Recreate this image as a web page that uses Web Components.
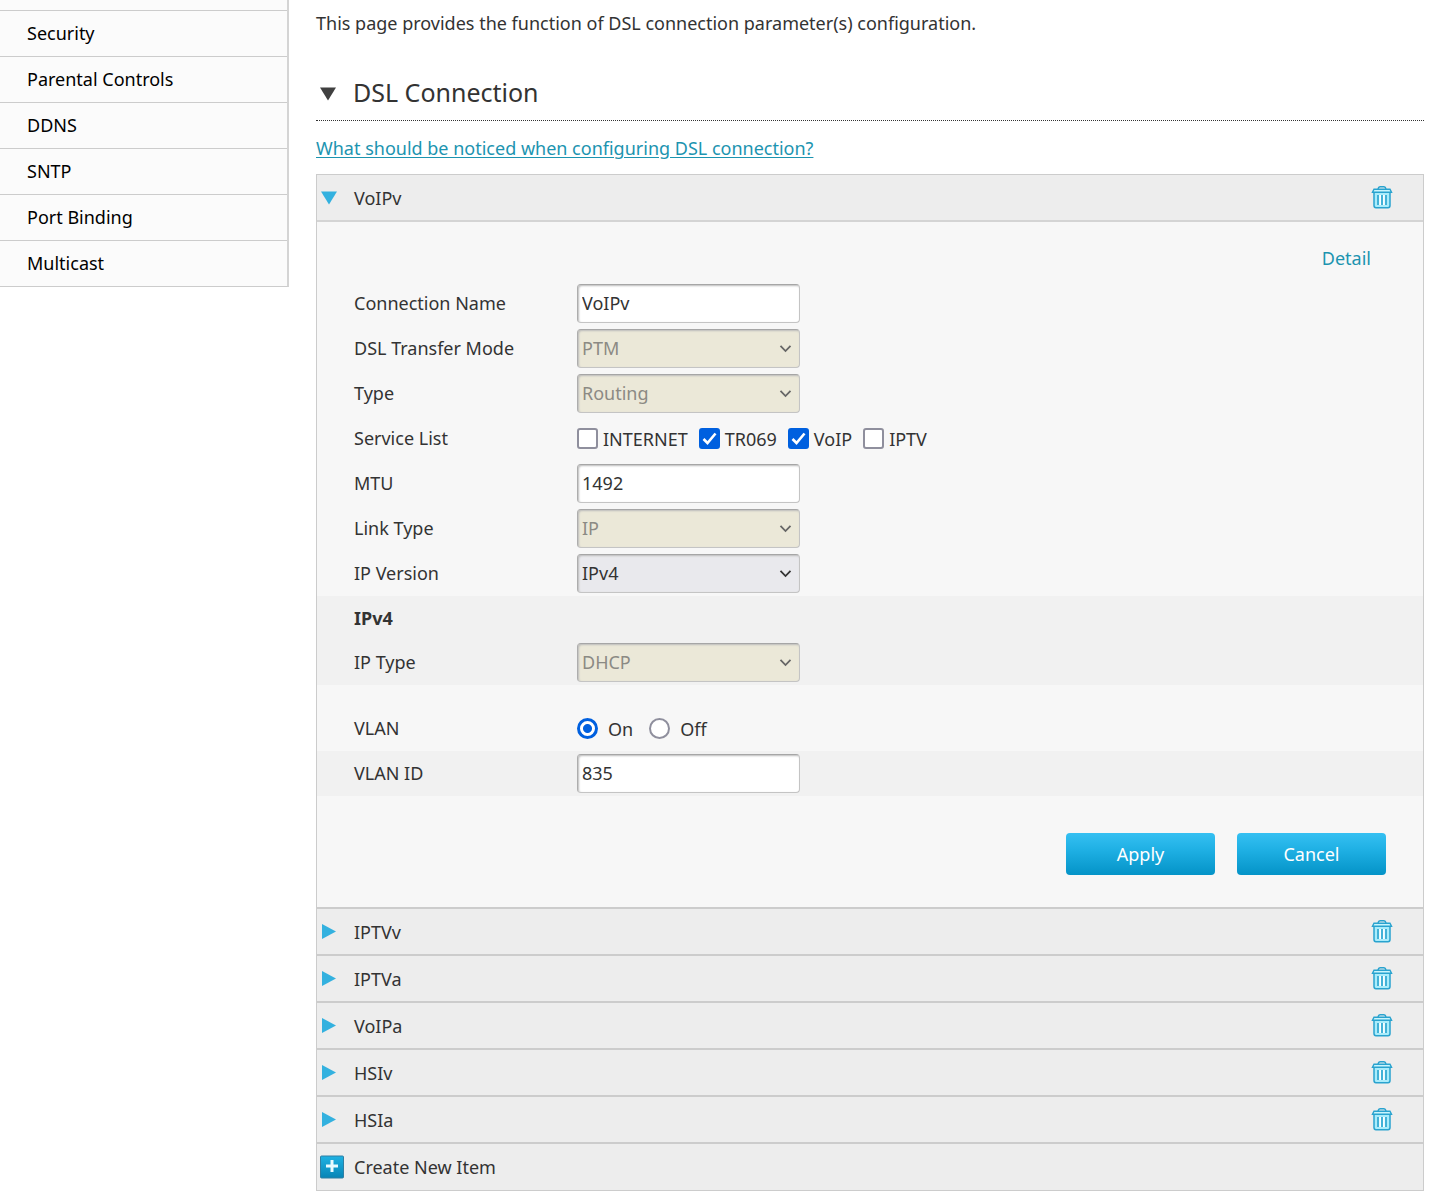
<!DOCTYPE html>
<html lang="en">
<head>
<meta charset="utf-8">
<title>DSL Connection</title>
<style>
  body {
    margin: 0;
    background: #fff;
    color: #333;
    font-family: "Noto Sans", "Open Sans", sans-serif;
    font-size: 18px;
    line-height: 24px;
  }
</style>
</head>
<body>

<page-layout>
  <side-menu slot="side">
    <menu-item>Security</menu-item>
    <menu-item>Parental Controls</menu-item>
    <menu-item>DDNS</menu-item>
    <menu-item>SNTP</menu-item>
    <menu-item>Port Binding</menu-item>
    <menu-item>Multicast</menu-item>
  </side-menu>

  <page-intro>This page provides the function of DSL connection parameter(s) configuration.</page-intro>
  <section-title>DSL Connection</section-title>
  <help-link>What should be noticed when configuring DSL connection?</help-link>

  <connection-list>
    <connection-item name="VoIPv" open>
      <detail-link>Detail</detail-link>
      <text-field label="Connection Name" value="VoIPv"></text-field>
      <select-field label="DSL Transfer Mode" value="PTM" disabled></select-field>
      <select-field label="Type" value="Routing" disabled></select-field>
      <choice-field label="Service List" type="checkbox" options="INTERNET,TR069,VoIP,IPTV" checked="TR069,VoIP"></choice-field>
      <text-field label="MTU" value="1492"></text-field>
      <select-field label="Link Type" value="IP" disabled></select-field>
      <select-field label="IP Version" value="IPv4"></select-field>
      <field-group>
        <group-title>IPv4</group-title>
        <select-field label="IP Type" value="DHCP" disabled></select-field>
      </field-group>
      <choice-field class="spaced" label="VLAN" type="radio" options="On,Off" checked="On"></choice-field>
      <field-group>
        <text-field label="VLAN ID" value="835"></text-field>
      </field-group>
      <button-bar>
        <action-button>Apply</action-button>
        <action-button>Cancel</action-button>
      </button-bar>
    </connection-item>
    <connection-item name="IPTVv"></connection-item>
    <connection-item name="IPTVa"></connection-item>
    <connection-item name="VoIPa"></connection-item>
    <connection-item name="HSIv"></connection-item>
    <connection-item name="HSIa"></connection-item>
    <create-item>Create New Item</create-item>
  </connection-list>
</page-layout>

<script>
// small helper: every element only needs its markup
function define(name, render) {
  customElements.define(name, class extends HTMLElement {
    connectedCallback() {
      if (this.shadowRoot) return;
      this.attachShadow({ mode: "open" });
      this.shadowRoot.innerHTML = render(this);
    }
  });
}

// Layout
define("page-layout", () => `
  <style>
    :host { display: flex; align-items: flex-start; gap: 27px; padding-right: 20px; }
    aside { flex: 0 0 289px; }
    main { flex: 1; min-width: 0; padding-top: 11px; }
  </style>
  <aside><slot name="side"></slot></aside>
  <main><slot></slot></main>
`);

define("side-menu", () => `
  <style>
    :host { display: block; }
    nav {
      padding-top: 10px;
      background: #fbfbfb;
      border-right: 2px solid #d4d4d4;
      border-bottom: 1px solid #ccc;
    }
  </style>
  <nav><slot></slot></nav>
`);

define("menu-item", () => `
  <style>
    :host { display: block; border-top: 1px solid #ccc; }
    a { display: block; padding: 10px 27px 11px; color: #000; text-decoration: none; }
  </style>
  <a href="#"><slot></slot></a>
`);

define("page-intro", () => `
  <style>
    :host { display: block; }
    p { margin: 0; }
  </style>
  <p><slot></slot></p>
`);

define("section-title", () => `
  <style>
    :host { display: block; margin-top: 40px; border-bottom: 1px dotted #333; }
    h2 {
      display: flex; align-items: center; gap: 17px;
      margin: 0; padding: 0 4px 11px;
      font-size: 25px; line-height: 34px; font-weight: normal;
    }
  </style>
  <h2>
    <svg width="16" height="18" viewBox="0 0 16 18"><path d="M0 4.5H16L8 17.5Z" fill="#404040"/></svg>
    <slot></slot>
  </h2>
`);

define("help-link", () => `
  <style>
    :host { display: block; margin: 15px 0 14px; }
    a { color: #1c94b0; text-underline-offset: 2px; }
  </style>
  <a href="#"><slot></slot></a>
`);

// Connections
define("connection-list", () => `
  <style>
    :host { display: block; border: 1px solid #ccc; }
  </style>
  <slot></slot>
`);

const trash = `
  <svg width="22" height="24" viewBox="0 0 22 24" fill="none" stroke="#29a3cf">
    <path d="M3 6V19.5Q3 21.7 5 21.7H17Q19 21.7 19 19.5V6Z" fill="#a9ecfb" stroke-width="1.5"/>
    <path d="M7 3Q7.5 0.8 9 0.8H13Q14.5 0.8 15 3" stroke-width="1.5"/>
    <path d="M3 3.2H19L20.5 6.2H1.5Z" fill="#c9f5fd" stroke-width="1.4"/>
    <path d="M9.1 9V19M12.9 9V19" stroke="#fff" stroke-width="1.6"/>
    <path d="M7 9V19M11 9V19M15 9V19" stroke-width="1.6"/>
  </svg>`;

define("connection-item", (el) => {
  const open = el.hasAttribute("open");
  const name = el.getAttribute("name");
  const arrow = open ? "M0 0.5H16L8 13.5Z" : "M1 -1L15 6.5L1 14Z";
  return `
  <style>
    :host { display: block; border-bottom: 2px solid #ccc; }
    header { display: flex; align-items: center; padding: 0 30px 0 4px; background: #ededed; }
    :host([open]) header { border-bottom: 2px solid #d4d4d4; }
    button { border: 0; padding: 0; background: none; color: inherit; font: inherit; cursor: pointer; }
    .toggle { flex: 1; display: flex; align-items: center; gap: 17px; padding: 11px 0 10px; text-align: left; }
    .delete { display: flex; }
    svg { overflow: visible; }
    section { background: #f7f7f7; }
  </style>
  <header>
    <button class="toggle" aria-expanded="${open}">
      <svg width="16" height="14" viewBox="0 0 16 14"><path d="${arrow}" fill="#33b1df"/></svg>
      ${name}
    </button>
    <button class="delete" aria-label="Delete ${name}">${trash}</button>
  </header>
  ${open ? "<section><slot></slot></section>" : ""}
`;
});

define("create-item", () => `
  <style>
    :host { display: block; background: #ededed; }
    button {
      display: flex; align-items: center; gap: 10px;
      width: 100%; padding: 11px 3px;
      border: 0; background: none; color: inherit; font: inherit; text-align: left;
    }
  </style>
  <button>
    <svg width="24" height="24" viewBox="0 0 24 24">
      <defs><linearGradient id="g" x2="0" y2="1"><stop stop-color="#1fb2e3"/><stop offset="1" stop-color="#0784b5"/></linearGradient></defs>
      <rect x="0.5" y="1" width="23" height="22" rx="1" fill="url(#g)" stroke="#2f7fa3"/>
      <path d="M12 5V17M6 11H18" stroke="#e9fbff" stroke-width="3"/>
    </svg>
    <slot></slot>
  </button>
`);

define("detail-link", () => `
  <style>
    :host { display: flex; justify-content: flex-end; padding: 24px 52px 11px; }
    a { color: #1c94b0; text-decoration: none; }
  </style>
  <a href="#"><slot></slot></a>
`);

// Form rows
const rowStyle = `
  :host { display: block; }
  .row { display: flex; align-items: center; min-height: 45px; padding-left: 37px; }
  .name { flex: 0 0 223px; padding-bottom: 2px; }
  .control { display: grid; width: 223px; }
  input, select {
    box-sizing: border-box;
    width: 100%;
    height: 39px;
    margin: 0;
    padding: 0 4px 1px;
    grid-area: 1 / 1;
    border: 1px solid #c4c4c4;
    border-top-color: #a6a6a6;
    border-left-color: #adadad;
    border-radius: 4px;
    box-shadow: inset 1px 1px 2px #bbb;
    background: #fff;
    color: #333;
    font: inherit;
  }
`;

define("text-field", (el) => `
  <style>${rowStyle}</style>
  <div class="row">
    <label class="name" for="field">${el.getAttribute("label")}</label>
    <div class="control"><input id="field" type="text" value="${el.getAttribute("value")}"></div>
  </div>
`);

define("select-field", (el) => `
  <style>
    ${rowStyle}
    select { appearance: none; background: #e9e9ed; opacity: 1; }
    select:disabled { background: #ebe8d8; color: #8b8a84; }
    svg { grid-area: 1 / 1; place-self: center end; margin-right: 8px; pointer-events: none; color: #333; }
    select:disabled + svg { color: #666; }
  </style>
  <div class="row">
    <label class="name" for="field">${el.getAttribute("label")}</label>
    <div class="control">
      <select id="field" ${el.hasAttribute("disabled") ? "disabled" : ""}>
        <option>${el.getAttribute("value")}</option>
      </select>
      <svg width="13" height="9" viewBox="0 0 13 9" fill="none" stroke="currentColor" stroke-width="1.8"><path d="M1.5 1.8L6.5 7L11.5 1.8"/></svg>
    </div>
  </div>
`);

define("choice-field", (el) => {
  const type = el.getAttribute("type");
  const checked = el.getAttribute("checked").split(",");
  const options = el.getAttribute("options").split(",").map((text) => `
    <label>
      <span class="box">
        <input type="${type}" name="choice" ${checked.includes(text) ? "checked" : ""}>
        <svg width="21" height="21" viewBox="0 0 21 21" fill="none" stroke="#fff" stroke-width="2.6"><path d="M4.5 11L8.5 15L16.5 5.5"/></svg>
      </span>
      ${text}
    </label>`).join("");
  return `
  <style>
    ${rowStyle}
    :host(.spaced) { padding-top: 21px; }
    .options { display: flex; gap: 11px; }
    .options.radio { gap: 16px; }
    label { display: flex; align-items: center; gap: 5px; }
    .radio label { gap: 10px; }
    .box { display: grid; }
    input {
      appearance: none;
      width: 21px; height: 21px; padding: 0;
      border: 2px solid #8f8f9d; border-radius: 3px;
      box-shadow: none;
    }
    input[type=radio] { border-radius: 50%; }
    input[type=checkbox]:checked { background: #0060df; border-color: #0060df; }
    input[type=radio]:checked {
      border-width: 3px;
      border-color: #0060df;
      background: radial-gradient(circle, #0060df 4px, #fff 5px);
    }
    svg { grid-area: 1 / 1; visibility: hidden; pointer-events: none; }
    input[type=checkbox]:checked + svg { visibility: visible; }
  </style>
  <div class="row" role="group" aria-labelledby="name">
    <span class="name" id="name">${el.getAttribute("label")}</span>
    <div class="options ${type}">${options}</div>
  </div>
`;
});

define("field-group", () => `
  <style>:host { display: block; background: #f1f1f1; }</style>
  <slot></slot>
`);

define("group-title", () => `
  <style>
    :host { display: block; }
    h3 { margin: 0; padding: 10px 37px; font-size: 18px; }
  </style>
  <h3><slot></slot></h3>
`);

// Buttons
define("button-bar", () => `
  <style>:host { display: flex; justify-content: flex-end; gap: 22px; padding: 37px 37px 32px; }</style>
  <slot></slot>
`);

define("action-button", () => `
  <style>
    :host { display: block; }
    button {
      min-width: 149px;
      height: 42px;
      border: 0;
      border-radius: 4px;
      background: linear-gradient(#35c0f2, #1fb0e4 40%, #0493c7);
      color: #fff;
      font: inherit;
    }
  </style>
  <button><slot></slot></button>
`);
</script>
</body>
</html>
